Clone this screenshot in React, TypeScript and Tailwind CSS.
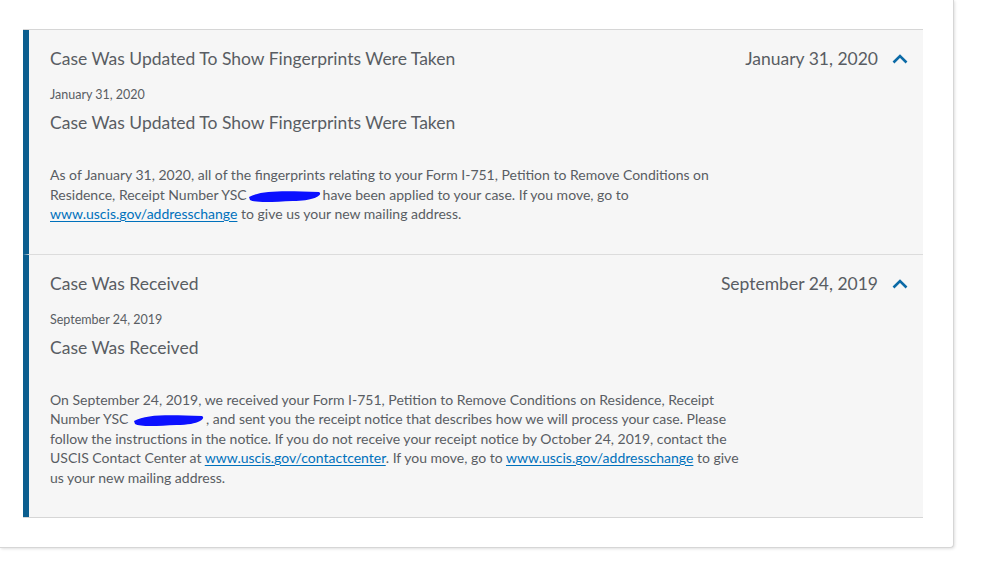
import type { ReactNode } from "react"

interface CaseUpdate {
  title: string
  date: string
  body: ReactNode
}

function Redacted({ width }: { width: number }) {
  return (
    <svg width={width} height="14" viewBox={`0 0 ${width} 14`} className="-my-[6px] inline-block align-middle">
      <path
        d={`M2 8 C ${width * 0.2} 1, ${width * 0.5} 2, ${width - 4} 3 C ${width} 5, ${width - 6} 12, ${width * 0.6} 12 C ${width * 0.35} 13, 8 14, 3 11 Z`}
        fill="#0b10ff"
      />
    </svg>
  )
}

function Link({ children }: { children: ReactNode }) {
  return <a className="text-[#0071bc] underline underline-offset-2">{children}</a>
}

function Chevron() {
  return (
    <svg width="16" height="10" viewBox="0 0 16 10" className="text-[#0b6aa6]">
      <polyline points="1.5,8.5 8,2 14.5,8.5" fill="none" stroke="currentColor" strokeWidth="2.6" />
    </svg>
  )
}

const updates: CaseUpdate[] = [
  {
    title: "Case Was Updated To Show Fingerprints Were Taken",
    date: "January 31, 2020",
    body: (
      <>
        <span className="block">
          As of January 31, 2020, all of the fingerprints relating to your Form I-751, Petition to Remove Conditions on
        </span>
        <span className="block">
          Residence, Receipt Number YSC<Redacted width={76} />have been applied to your case. If you move, go to
        </span>
        <span className="block">
          <Link>www.uscis.gov/addresschange</Link> to give us your new mailing address.
        </span>
      </>
    ),
  },
  {
    title: "Case Was Received",
    date: "September 24, 2019",
    body: (
      <>
        <span className="block">
          On September 24, 2019, we received your Form I-751, Petition to Remove Conditions on Residence, Receipt
        </span>
        <span className="block">
          Number YSC <Redacted width={74} />, and sent you the receipt notice that describes how we will process your case. Please
        </span>
        <span className="block">
          follow the instructions in the notice. If you do not receive your receipt notice by October 24, 2019, contact the
        </span>
        <span className="block">
          USCIS Contact Center at <Link>www.uscis.gov/contactcenter</Link>. If you move, go to{" "}
          <Link>www.uscis.gov/addresschange</Link> to give
        </span>
        <span className="block">us your new mailing address.</span>
      </>
    ),
  },
]

function UpdateItem({ update, last }: { update: CaseUpdate; last: boolean }) {
  return (
    <div className={`border-l-[6px] border-[#0b5e8f] ${last ? "" : "border-b border-b-[#dcdcdc]"}`}>
      <div className="flex items-center justify-between pl-[21px] pr-[15px] pt-[17px]">
        <h3 className="text-[17.5px] leading-[24px] text-[#595d63]">{update.title}</h3>
        <div className="flex items-center gap-[14px]">
          <span className="text-[17.5px] leading-[24px] text-[#595d63]">{update.date}</span>
          <Chevron />
        </div>
      </div>
      <div className="pl-[21px] pr-6 pb-[30px]">
        <p className="mt-[16px] text-[12.5px] leading-[16px] text-[#595d63]">{update.date}</p>
        <h4 className="mt-[8px] text-[17.5px] leading-[24px] text-[#595d63]">{update.title}</h4>
        <div className="mt-[30px] text-[14px] leading-[19.5px] text-[#595d63]">{update.body}</div>
      </div>
    </div>
  )
}

export default function App() {
  return (
    <div className="h-[578px] w-[1000px] bg-white font-['Lato','Open_Sans',sans-serif]">
      <div className="h-[548px] w-[954px] rounded-br-[4px] border-r border-b border-[#d6d6d6] bg-white pt-[29px] pl-[23px] shadow-[1px_1px_3px_rgba(0,0,0,0.12)]">
        <div className="w-[900px] border-t border-b border-[#d6d6d6] bg-[#f6f6f6]">
          {updates.map((u, i) => (
            <UpdateItem key={u.title} update={u} last={i === updates.length - 1} />
          ))}
        </div>
      </div>
    </div>
  )
}
